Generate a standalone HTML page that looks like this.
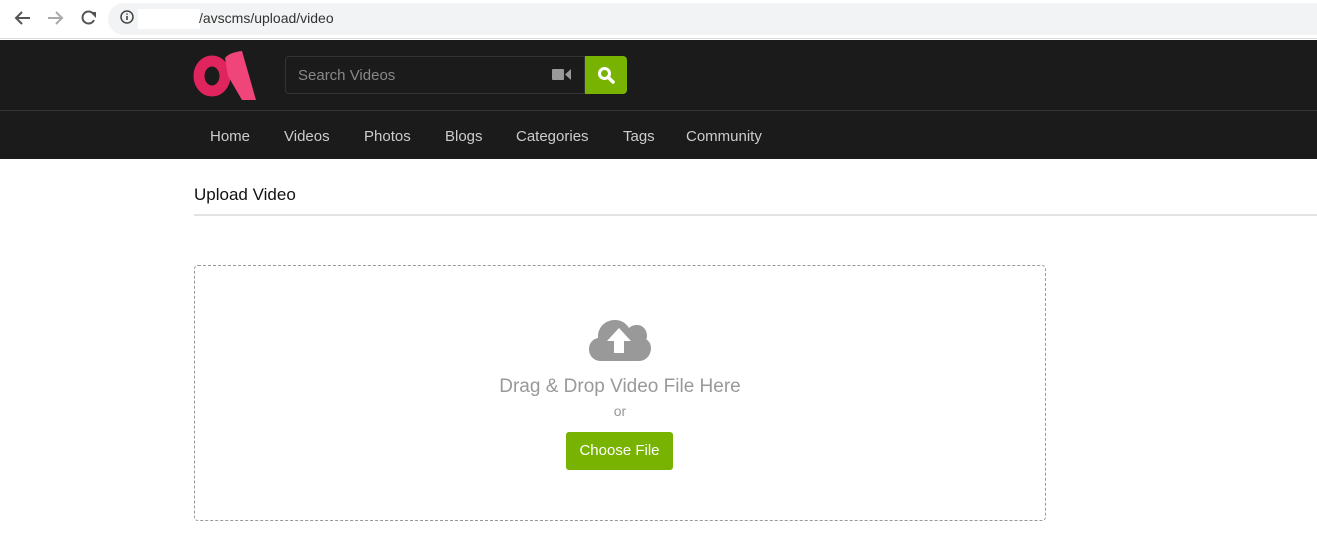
<!DOCTYPE html>
<html><head><style>
body{margin:0;width:1317px;height:559px;overflow:hidden;background:#fff;font-family:"Liberation Sans",sans-serif;position:relative}
.a{position:absolute}
</style></head><body>
<div class="a" style="left:0;top:0;width:1317px;height:39px;background:#fff"></div>
<div class="a" style="left:0;top:38px;width:1317px;height:1px;background:#ddd"></div>
<div class="a" style="left:108px;top:3px;width:1209px;height:32px;border-radius:16px 0 0 16px;background:#f1f3f4"></div>
<svg class="a" style="left:12px;top:9px" width="90" height="20" viewBox="0 0 90 20"><g fill="none" stroke-width="2"><path d="M18 9H5M10 3 4 9l6 6" stroke="#555"/><path d="M36 9h13M44 3l6 6-6 6" stroke="#aaa"/><path d="M81 4.5A6 6 0 1 0 82 11" stroke="#555"/></g><path d="M78 3h6v6z" fill="#555"/></svg>
<svg class="a" style="left:120px;top:10px" width="14" height="14" viewBox="0 0 14 14"><circle cx="7" cy="7" r="6" fill="none" stroke="#444" stroke-width="1.5"/><path d="M7 6v4M7 3.5v1.2" stroke="#444" stroke-width="1.6"/></svg>
<div class="a" style="left:138px;top:9px;width:62px;height:20px;background:#fff"></div>
<div class="a" style="left:199px;top:10px;font-size:14px;color:#333">/avscms/upload/video</div>
<div class="a" style="left:0;top:40px;width:1317px;height:119px;background:#1b1b1b"></div>
<div class="a" style="left:0;top:110px;width:1317px;height:1px;background:#333"></div>
<svg class="a" style="left:188px;top:46px" width="75" height="60" viewBox="0 0 75 60"><ellipse cx="24" cy="30" rx="13" ry="15" fill="none" stroke="#e0245e" stroke-width="11"/><path d="M37 12C40 8 46 6 54 5L68 54H54L40 30z" fill="#f0457a"/></svg>
<div class="a" style="left:285px;top:56px;width:298px;height:36px;border:1px solid #333;border-radius:4px 0 0 4px;background:#1b1b1b"></div>
<div class="a" style="left:298px;top:67px;font-size:15px;color:#888">Search Videos</div>
<svg class="a" style="left:552px;top:68px" width="19" height="13" viewBox="0 0 19 13"><rect x="0" y="1" width="12" height="11" rx="1" fill="#999"/><path d="M13 6.5 19 1v11z" fill="#999"/></svg>
<div class="a" style="left:585px;top:56px;width:42px;height:38px;background:#77b300;border-radius:0 4px 4px 0"></div>
<svg class="a" style="left:597px;top:66px" width="18" height="18" viewBox="0 0 18 18"><circle cx="7.5" cy="7.5" r="5" fill="none" stroke="#fff" stroke-width="3"/><path d="M11 11l5 5" stroke="#fff" stroke-width="3.5" stroke-linecap="round"/></svg>
<div class="a" style="left:210px;top:128px;font-size:15px;color:#ccc">
<span style="position:absolute;left:0">Home</span><span style="position:absolute;left:74px">Videos</span><span style="position:absolute;left:154px">Photos</span><span style="position:absolute;left:235px">Blogs</span><span style="position:absolute;left:306px;white-space:nowrap">Categories</span><span style="position:absolute;left:413px">Tags</span><span style="position:absolute;left:476px">Community</span></div>
<div class="a" style="left:194px;top:185px;font-size:17px;color:#111">Upload Video</div>
<div class="a" style="left:194px;top:214px;width:1123px;height:2px;background:#e3e3e3"></div>
<div class="a" style="left:194px;top:265px;width:850px;height:254px;border:1px dashed #999;border-radius:4px"></div>
<svg class="a" style="left:589px;top:318px" width="62" height="44" viewBox="0 0 62 44"><path d="M12 43C5 43 0 38 0 31c0-6 4-10 9-11 0-1 0-2 0-3C10 8 17 2 26 2c6 0 11 3 14 8 2-2 5-3 8-3 6 0 10 5 10 11 0 1 0 2-1 3 3 2 5 5 5 9 0 7-5 13-12 13z" fill="#999"/><path d="M30 10 18 23h7v12h10V23h7z" fill="#fff"/></svg>
<div class="a" style="left:194px;top:376px;width:852px;text-align:center;font-size:19px;color:#999">Drag &amp; Drop Video File Here</div>
<div class="a" style="left:194px;top:403px;width:852px;text-align:center;font-size:14px;color:#999">or</div>
<div class="a" style="left:566px;top:432px;width:107px;height:38px;background:#77b300;border-radius:3px;color:#fff;font-size:15px;line-height:38px;text-align:center">Choose File</div>
</body></html>
